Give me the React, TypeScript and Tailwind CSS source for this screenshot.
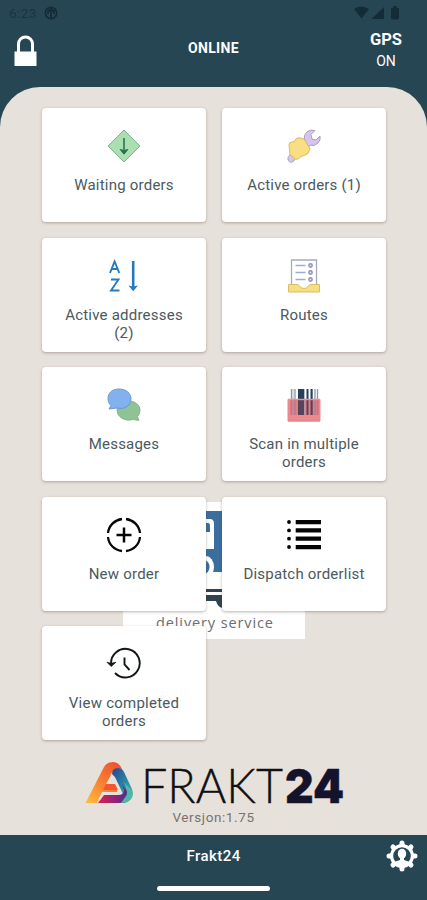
import React from 'react';

const DownDiamond = () => (
  <svg width="34" height="34" viewBox="0 0 34 34" fill="none">
    <path d="M17 1 33 17 17 33 1 17Z" fill="#acdfb0" stroke="#79b391" strokeWidth="1" strokeLinejoin="round" />
    <path d="M17 9v12" stroke="#347b58" strokeWidth="1.7" />
    <path d="m13.2 20.5 3.8 1 3.8-1L17 25.2Z" fill="#28704d" stroke="#28704d" />
  </svg>
);

const Plug = () => (
  <svg width="34" height="34" viewBox="0 0 34 34" strokeLinejoin="round">
    <path d="M3 26q-3 2-2 5 2 4 6 1l2-4-3-3Z" fill="#d5c5e9" stroke="#a89abd" strokeWidth=".8" />
    <path d="M18 12q-2-6 2-9 3-3 8-1.500l-4 4 1 4.500 4 1 4-4q1 4-2 7-4 4-8 2l-2 3Z" fill="#d5c5ee" stroke="#9c8db5" strokeWidth=".8" />
    <path d="M2 16q0-3 3-3 3 0 4-3 2-2 4-1 2 0 4 1l5 8q2 1 0 4 0 3-4 4-4 1-7 4-3 1-4-1-1-2-4-3Z" fill="#f8df83" stroke="#d2b65c" strokeWidth=".9" />
  </svg>
);

const Alphabetical = () => (
  <svg width="34" height="34" viewBox="0 0 34 34" fill="none" stroke="#257abd" strokeWidth="1.900">
    <path d="M3 14 7.600 2.500 12.300 14M4.700 10h6M4 20.500h7.500L4 31.500h8.500" />
    <path d="M26.200 2v26" strokeWidth="2.600" />
    <path d="m21.400 26.500 4.800 1 4.800-1-4.800 5.700Z" fill="#257abd" stroke="none" />
  </svg>
);

const RouteList = () => (
  <svg width="34" height="34" viewBox="0 0 34 34" fill="none">
    <path d="M4.500 1h25v29h-25Z" fill="#fff" stroke="#a2adbc" strokeWidth="1.300" />
    <path d="M8.500 6.500h10m-10 7h10m-10 7h10" stroke="#9caadb" strokeWidth="1.400" />
    <g fill="#dfdeef" stroke="#8e8ebb" strokeWidth="1.400"><circle cx="23.500" cy="6.500" r="1.700" /><circle cx="23.500" cy="13.500" r="1.700" /><circle cx="23.500" cy="20.500" r="1.700" /></g>
    <path d="M1.500 25.500H10c3 0 3 4 7 4s4-4 7-4h8.500v7.500h-31Z" fill="#f5df83" stroke="#d9bd66" />
  </svg>
);

const Chats = () => (
  <svg width="34" height="34" viewBox="0 0 34 34" strokeLinejoin="round">
    <path d="M22 13c6 0 11 4 11 9 0 3-1 5-2.500 6.500l1.500 4-6-1C18 34 10 29 10 22c0-5 5-9 12-9Z" fill="#8ec395" stroke="#7dac83" strokeWidth=".8" />
    <path d="M12 1C5 1 1 5 1 10.500c0 3 1 5.500 3 7L2 21l8-1c8 2 14-3 14-9C24 5 19 1 12 1Z" fill="#83b1ed" stroke="#6694cd" strokeWidth=".9" />
  </svg>
);

const Barcode = () => (
  <svg width="34" height="34" viewBox="0 0 34 34">
    <rect x=".5" y="11" width="33" height="22.500" rx="1" fill="#ee888e" />
    <path d="M4.500 1v26M8 1v26M28 1v26M30.500 1v26" stroke="#8998a4" strokeWidth="1.300" />
    <path d="M11 1h6v26h-6zm8.500 0h2v26h-2zm4 0h2.200v26h-2.200z" fill="#28415a" />
    <path d="M6 1v26M17.500 1v26" stroke="#a1adb6" strokeWidth=".8" />
    <path d="M1 11.500h32" stroke="#ed8e94" strokeWidth="1.500" />
    <path d="M1 33h32" stroke="#dc7a81" strokeWidth=".8" />
    <path d="M3 12h29v15H3Z" fill="#d75162" opacity=".25" />
  </svg>
);

const NewOrder = () => (
  <svg width="36" height="36" viewBox="0 0 36 36" fill="none" stroke="#050708">
    <path d="M2 16C2.700 8.500 8.500 3 16 2M20 2c7.500 1 13.300 6.500 14 14M34 20c-.7 7.500-6.500 13.300-14 14M16 34C8.500 33.300 2.700 27.500 2 20" strokeWidth="2.300" />
    <path d="M18 10.500v15M10.500 18h15" strokeWidth="2.500" />
  </svg>
);

const OrderList = () => (
  <svg width="36" height="34" viewBox="0 0 36 34" fill="#050505">
    <circle cx="3" cy="4" r="1.900" /><circle cx="3" cy="12.400" r="1.900" /><circle cx="3" cy="20.700" r="1.900" /><circle cx="3" cy="29" r="1.900" />
    <path d="M9.700 2h25.300v4.200H9.700zm0 8.300h25.300v4.200H9.700zm0 8.300h25.300v4.200H9.700zm0 8.400h25.300v4.200H9.700z" />
  </svg>
);

const History = () => (
  <svg width="36" height="34" viewBox="0 0 36 34" fill="none" stroke="#111718">
    <path d="M5.100 17A14.300 14.300 0 1 1 9 26" strokeWidth="1.900" />
    <path d="m1 15.300 4.100 1 4.800-1L5.200 19.500Z" fill="#111718" strokeWidth=".7" />
    <path d="M18.500 10.500v7l5 5.500" strokeWidth="1.900" />
  </svg>
);

const cards = [
  { icon: <DownDiamond />, label: 'Waiting orders', text: 'tracking-[0.22px]' },
  { icon: <Plug />, label: 'Active orders (1)', text: 'tracking-[0.2px]' },
  { icon: <Alphabetical />, label: <>Active addresses<br />(2)</>, text: 'tracking-[0.22px]' },
  { icon: <RouteList />, label: 'Routes', text: 'tracking-[0.22px]' },
  { icon: <Chats />, label: 'Messages', text: 'tracking-[0.2px]' },
  { icon: <Barcode />, label: <>Scan in multiple<br />orders</>, text: 'tracking-[0.22px]' },
  { icon: <NewOrder />, label: 'New order', text: 'tracking-[0.22px]' },
  { icon: <OrderList />, label: 'Dispatch orderlist', text: 'tracking-[0.2px]' },
  { icon: <History />, label: <>View completed<br />orders</>, text: 'tracking-[0.24px]' },
];

function Header() {
  return (
    <header className="h-[87px] shrink-0 text-white">
      <div className="flex h-[26px] items-center justify-between pl-[9px] pr-[27px] text-[#142c38]">
        <div className="flex items-center gap-[7px]">
          <span className="text-[13.500px] tracking-[0.4px] text-[#1b3441]">6:23</span>
          <svg width="14" height="14" viewBox="0 0 14 14" fill="none" stroke="currentColor" strokeWidth="1.700"><circle cx="7" cy="7" r="5.700" /><path d="M7 12V6m-3 2V5h6v3M4 5l3-2 3 2" /></svg>
        </div>
        <svg width="46" height="15" viewBox="0 0 46 15" fill="currentColor"><path d="M0 3q7-5 15 0L7.500 12.500ZM17.500 13 30 1v12Z" /><path d="M37 2h2V0h4v2h2v10q0 1.500-1.500 1.500h-5Q37 13.500 37 12Z" /></svg>
      </div>
      <div className="grid h-[61px] grid-cols-3">
        <svg className="ml-[14px] mt-[8px]" width="24" height="33" viewBox="0 0 24 33"><path d="M4.500 18V10a7 7 0 0 1 14 0v8" fill="none" stroke="white" strokeWidth="3" /><path d="M.500 17.500h22v14.500H.500Z" fill="white" /></svg>
        <div className="mt-[12px] text-center text-[14px] font-bold leading-5 tracking-[0.35px]">ONLINE</div>
        <div className="ml-auto mr-[17px] mt-[4px] w-[48px] text-center">
          <div className="text-[16.500px] font-bold leading-5">GPS</div>
          <div className="mt-[2px] text-[14px] leading-[18px]">ON</div>
        </div>
      </div>
    </header>
  );
}

function ServiceBackdrop() {
  return (
    <svg className="absolute left-[123px] top-[415px]" width="182" height="137" viewBox="0 0 182 137">
      <path d="M0 0h182v137H0Z" fill="#fff" />
      <path d="M70 9h29v61H70Z" fill="#3b6d9e" />
      <path d="M82 17h5q4 0 4 5v25H80Z" fill="#fff" />
      <path d="M82 21h3q2 0 2 3v6h-5Z" fill="#3b6d9e" />
      <ellipse cx="83" cy="65" rx="8" ry="11" fill="#fff" /><ellipse cx="82" cy="65" rx="4.500" ry="6.500" fill="#3b6d9e" />
      <path d="M80 76h6l5-6h9v16H80Z" fill="#fff" />
      <path d="M80 87h20v3H80zm0 6h20v13q-5 0-7-7H80Z" fill="#30434f" />
      <text x="33" y="126" textLength="117" fontFamily="Open Sans" fontSize="14.500" fill="#6b6d70">delivery service</text>
    </svg>
  );
}

function BrandMark() {
  return (
    <g>
      <path d="M1.500 44 20 8q3-5 9-5 6 0 9 7-7-2-11 5l-1 3-4 7h8l4 8H18L13 44Z" fill="url(#warm)" />
      <path d="M28 15q0-6 6-6 4 0 6 4l8 17q3 8-3 12-2 2-7 2l2-7-9-19Z" fill="url(#cool)" />
      <path d="M20 36h14q6 0 6-5l-2-6 8 11q-1 8-10 8H14Z" fill="url(#base)" />
      <path d="m40 23 7 8q3 8-4 12l-6 1 5-7q2-3 0-8Z" fill="#4db8a8" />
      <path d="M27 20 23 26h8l-4-8 7 13q1 3-2 3H19l-4 7" fill="none" stroke="#e7e1db" strokeWidth="1.700" strokeLinejoin="round" />
      <path d="m22 25 9 0 3 6H19Z" fill="#f3572f" />
    </g>
  );
}

function Brand() {
  return (
    <div className="absolute inset-x-0 top-[669px] flex flex-col items-center">
      <svg className="overflow-visible" width="260" height="56" viewBox="0 0 260 56">
        <defs>
          <linearGradient id="warm" x1="0" y1="1" x2=".8" y2="0"><stop stopColor="#ffc03e" /><stop offset=".5" stopColor="#f98231" /><stop offset="1" stopColor="#ee542d" /></linearGradient>
          <linearGradient id="cool" x1="0" y1="0" x2="1" y2="1"><stop stopColor="#30408e" /><stop offset=".55" stopColor="#278ca8" /><stop offset="1" stopColor="#65caae" /></linearGradient>
          <linearGradient id="base"><stop stopColor="#df204d" /><stop offset=".6" stopColor="#86247e" /><stop offset="1" stopColor="#3d3689" /></linearGradient>
        </defs>
        <g transform="translate(0 3)"><BrandMark /></g>
        <text x="57" y="46.500" textLength="142" lengthAdjust="spacingAndGlyphs" fontFamily="Lato" fontWeight="300" fontSize="47" fill="#101115" stroke="#101115" strokeWidth=".35">FRAKT</text>
        <text x="201" y="46.500" textLength="59" lengthAdjust="spacingAndGlyphs" fontFamily="Inter" fontWeight="900" fontSize="47" fill="#14132b" stroke="#14132b" strokeWidth=".4">24</text>
      </svg>
      <span className="-mt-[3px] text-[13.500px] leading-4 tracking-[0.6px] text-[#77736f]">Versjon:1.75</span>
    </div>
  );
}

function Footer() {
  return (
    <footer className="flex h-[65px] shrink-0 flex-col bg-[#264653] text-white">
      <div className="grid h-[42px] grid-cols-[1fr_auto_1fr] items-center">
        <span />
        <span className="text-[15px] font-medium tracking-[0.45px]">Frakt24</span>
        <svg className="ml-auto mr-[9px] -mt-[1px]" width="32" height="32" viewBox="0 0 32 32">
          <path d="M16 3v26M3 16h26M7 7l18 18M7 25 25 7" stroke="white" strokeWidth="5" strokeLinecap="round" />
          <circle cx="16" cy="16" r="12" fill="white" /><circle cx="16" cy="16" r="8.800" fill="#264653" />
          <ellipse cx="16" cy="13.800" rx="4.200" ry="5" fill="white" /><path d="M14 17h4v3l6 2-3 4h-10l-3-4 6-2Z" fill="white" />
        </svg>
      </div>
      <div className="mx-auto mt-[9px] h-[5px] w-[113px] rounded-full bg-white" />
    </footer>
  );
}

export default function App() {
  return (
    <div className="flex h-[900px] w-[427px] flex-col overflow-hidden bg-[#264653] font-['Roboto',sans-serif]">
      <Header />
      <main className="relative min-h-0 flex-1 rounded-t-[40px] bg-[#e7e1db] pt-[21px]">
        <ServiceBackdrop />
        <div className="relative ml-[42px] grid w-[344px] grid-cols-2 gap-x-[16px] gap-y-[15.6px]">
          {cards.map(({ icon, label, text }, i) => (
            <section key={i} className="flex h-[114px] flex-col items-center rounded-[4px] bg-white pt-[19px] shadow-[0_1px_3px_rgba(70,60,50,0.38)]">
              <div className="flex h-[38px] items-center">{icon}</div>
              <h2 className={`mt-[11px] whitespace-nowrap text-center text-[15px] leading-[18px] text-[#4b5960] ${text}`}>{label}</h2>
            </section>
          ))}
        </div>
        <Brand />
      </main>
      <Footer />
    </div>
  );
}
